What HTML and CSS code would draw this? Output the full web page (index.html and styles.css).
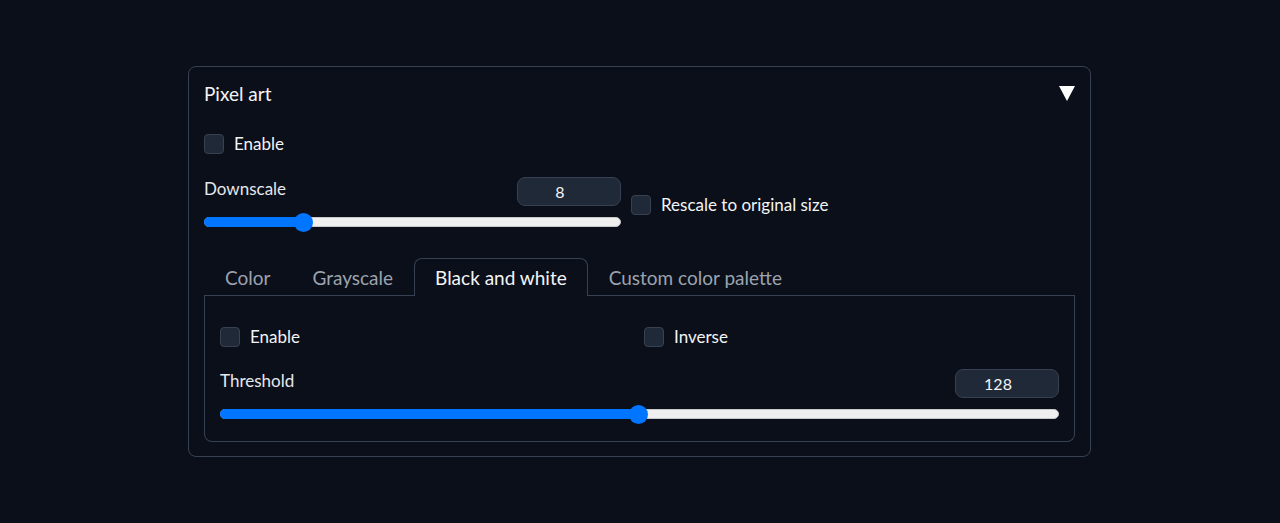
FILE: index.html
```html
<!DOCTYPE html>
<html>
<head>
<meta charset="utf-8">
<link rel="stylesheet" href="styles.css">
</head>
<body>
<div class="card">
  <div class="header">
    <span class="title">Pixel art</span>
    <svg class="caret" width="16" height="15" viewBox="0 0 16 15"><polygon points="0,0 16,0 8,15" fill="#ffffff"/></svg>
  </div>
  <label class="check first"><span class="box"></span><span>Enable</span></label>
  <div class="scale-row">
    <div class="slider-block narrow">
      <div class="slider-head">
        <span class="label">Downscale</span>
        <div class="num">8</div>
      </div>
      <div class="range" style="--pct: 22.4%"><div class="fill"></div><div class="thumb"></div></div>
    </div>
    <label class="check"><span class="box"></span><span>Rescale to original size</span></label>
  </div>
  <div class="tabs">
    <div class="tab">Color</div>
    <div class="tab">Grayscale</div>
    <div class="tab active">Black and white</div>
    <div class="tab">Custom color palette</div>
    <div class="tab-rest"></div>
  </div>
  <div class="panel">
    <div class="cols">
      <label class="check"><span class="box"></span><span>Enable</span></label>
      <label class="check"><span class="box"></span><span>Inverse</span></label>
    </div>
    <div class="slider-block">
      <div class="slider-head">
        <span class="label">Threshold</span>
        <div class="num">128</div>
      </div>
      <div class="range" style="--pct: 49.8%"><div class="fill"></div><div class="thumb"></div></div>
    </div>
  </div>
</div>
</body>
</html>
```
FILE: styles.css
```css
* { box-sizing: border-box; }
html, body { margin: 0; padding: 0; }
body {
  background: #0b0f19;
  font-family: "Source Sans Pro", Lato, "Noto Sans", sans-serif;
  color: #e5e7eb;
  height: 523px;
}
.card {
  margin: 66px 0 0 188px;
  width: 903px;
  height: 391px;
  border: 1px solid #374151;
  border-radius: 8px;
  padding: 15px;
}
.header {
  display: flex;
  justify-content: space-between;
  align-items: center;
  height: 24px;
}
.title {
  font-size: 19px;
  color: #f3f4f6;
  line-height: 24px;
}
.caret { margin-top: -1px; }
.check {
  display: flex;
  align-items: center;
  gap: 10px;
  font-size: 17px;
  color: #f3f4f6;
  line-height: 20px;
}
.check.first { margin-top: 28px; }
.box {
  width: 20px;
  height: 20px;
  border: 1px solid #374151;
  background: #1f2937;
  border-radius: 4px;
  flex: none;
}
.scale-row {
  display: flex;
  align-items: center;
  gap: 10px;
  margin-top: 23px;
  width: 871px;
}
.slider-block.narrow { width: 417px; }
.slider-head {
  display: flex;
  justify-content: space-between;
  align-items: center;
  height: 29px;
}
.label {
  font-size: 17px;
  color: #e5e7eb;
  line-height: 20px;
  margin-top: -5px;
}
.num {
  width: 104px;
  height: 29px;
  border: 1px solid #374151;
  background: #1f2937;
  border-radius: 8px;
  text-align: center;
  padding-right: 18px;
  font-size: 16px;
  line-height: 27px;
  color: #f3f4f6;
}
.range {
  position: relative;
  height: 10px;
  margin-top: 11px;
  margin-bottom: 5px;
  border-radius: 5px;
  background: #efefef;
  border: 1px solid #c8c8c8;
}
.range .fill {
  position: absolute;
  left: -1px; top: -1px; bottom: -1px;
  width: calc(9px + (100% - 18px) * var(--pct) / 100%);
  background: #0075ff;
  border-radius: 5px 0 0 5px;
}
.range .thumb {
  position: absolute;
  top: 50%;
  left: calc((100% - 18px) * var(--pct) / 100%);
  width: 19px;
  height: 19px;
  margin-top: -9.5px;
  border-radius: 50%;
  background: #0075ff;
}
.tabs {
  display: flex;
  margin-top: 26px;
  height: 38px;
  align-items: stretch;
}
.tab {
  height: 38px;
  padding: 2px 21px 0;
  font-size: 19px;
  line-height: 36px;
  color: #9ca3af;
  border-bottom: 1px solid #374151;
  white-space: nowrap;
}
.tab.active {
  color: #f3f4f6;
  padding: 1px 20px 0;
  border: 1px solid #374151;
  border-bottom: none;
  border-radius: 8px 8px 0 0;
}
.tab-rest {
  flex: 1;
  border-bottom: 1px solid #374151;
}
.panel {
  border: 1px solid #374151;
  border-top: none;
  border-radius: 0 0 8px 8px;
  height: 146px;
  padding: 31px 15px 15px 15px;
}
.cols {
  display: grid;
  grid-template-columns: 1fr 1fr;
  gap: 9px;
}
.panel .slider-block { margin-top: 22px; }
```
